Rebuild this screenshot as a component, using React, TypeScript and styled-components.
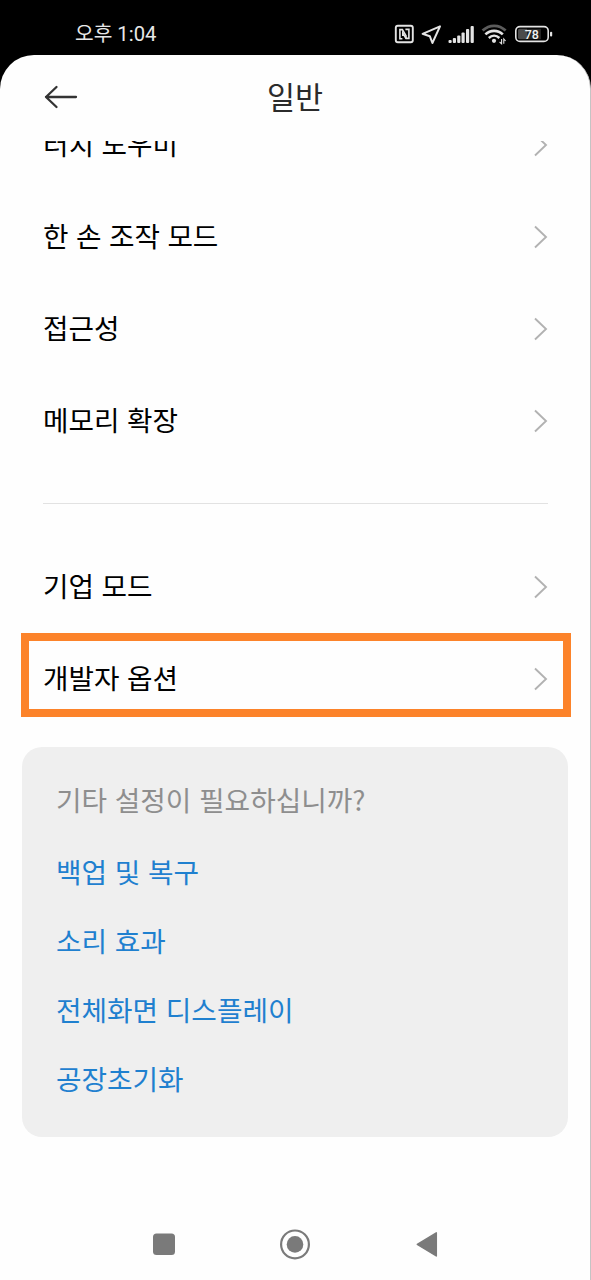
import React from "react";
import styled, { createGlobalStyle } from "styled-components";

const GlobalStyle = createGlobalStyle`
  * { box-sizing: border-box; }
  body { margin: 0; background: #000; }
`;

const Phone = styled.div`
  width: 591px;
  height: 1280px;
  display: flex;
  flex-direction: column;
  overflow: hidden;
  background: #000;
  font-family: "Noto Sans CJK KR", "Noto Sans", sans-serif;
  color: #000;
`;

const StatusBar = styled.header`
  height: 55px;
  flex: none;
  display: flex;
  align-items: center;
  justify-content: space-between;
  padding: 13px 38px 0 75px;
`;

const Clock = styled.span`
  font-family: Roboto, "Noto Sans CJK KR", sans-serif;
  font-size: 20.3px;
  line-height: 28px;
  color: #e8e8e8;
`;

const StatusIcons = styled.div`
  display: flex;
  align-items: center;
  height: 24px;

  svg { display: block; }
`;

const Screen = styled.main`
  flex: 1;
  min-height: 0;
  display: flex;
  flex-direction: column;
  background: #fefefe;
  border-right: 1px solid #c4c4c4;
  border-radius: 34px 34px 0 0;
`;

const TitleBar = styled.div`
  height: 86px;
  flex: none;
  display: grid;
  grid-template-columns: 80px 1fr 80px;
  align-items: center;
`;

const BackButton = styled.button`
  border: 0;
  padding: 0 0 2px 44px;
  background: none;
  display: flex;
`;

const Title = styled.h1`
  margin: 0;
  padding-bottom: 4px;
  text-align: center;
  font-size: 30.5px;
  font-weight: 400;
  line-height: 44px;
  color: #2b2b2b;
`;

const Content = styled.div`
  flex: 1;
  min-height: 0;
  overflow: hidden;
`;

const List = styled.div<{ $offset?: number }>`
  margin-top: ${({ $offset = 0 }) => $offset}px;
`;

const Row = styled.div`
  height: 92px;
  display: flex;
  align-items: center;
  justify-content: space-between;
  padding: 0 42px 0 43px;
  font-size: 27.7px;
  line-height: 40px;
  word-spacing: 1.3px;
`;

const RowLabel = styled.span`
  padding-bottom: 4px;
`;

const Divider = styled.hr`
  height: 1px;
  border: 0;
  margin: 36px 42px 37px 43px;
  background: #e2e2e2;
`;

const Highlight = styled.div`
  height: 84px;
  margin: 0 19px 0 21px;
  border: 8px solid #fc832a;
  display: flex;

  ${Row} {
    flex: 1;
    height: auto;
    padding: 7px 15px 0 14px;
  }
`;

const Card = styled.section`
  height: 390px;
  margin: 30px 22px 0 22px;
  padding: 18px 34px;
  border-radius: 20px;
  background: #efefef;
  font-size: 27.75px;
  word-spacing: 1.5px;
`;

const CardTitle = styled.p`
  margin: 0 0 3px;
  line-height: 69px;
  color: #8e8e8e;
`;

const CardLink = styled.a`
  display: block;
  line-height: 69px;
  color: #1f80cf;
`;

const NavBar = styled.nav`
  height: 72px;
  flex: none;
  display: flex;
  justify-content: space-between;
  align-items: center;
  padding: 0 152px 0 152px;
`;

const Chevron = () => (
  <svg width="14" height="24" viewBox="0 0 14 24" fill="none" stroke="#b2b2b2" strokeWidth="1.9">
    <path d="M1 1.5 L12 12 L1 22.5" />
  </svg>
);

const SettingRow = ({ label }: { label: string }) => (
  <Row>
    <RowLabel>{label}</RowLabel>
    <Chevron />
  </Row>
);

const signalBars = [
  [0.5, 3], [4.8, 5], [9.2, 7.5], [13.5, 10.5], [18, 14], [22.6, 17],
];

const StatusGlyphs = () => (
  <svg width="159" height="24" viewBox="394 22 159 24" fill="none" stroke="#e4e4e4">
    <rect x="395.8" y="25.8" width="17" height="16.4" rx="2" strokeWidth="1.9" />
    <path d="M402.4 38.8H399.9V29.6H402.4L406 35.6V38.4" strokeWidth="1.6" />
    <path d="M405.4 29.4H408.9V38.4H406L402.8 33V36" strokeWidth="1.6" />
    <path d="M440 26.3L422.6 33.8L429.8 36.2L432.4 43Z" strokeWidth="2" strokeLinejoin="round" />
    {signalBars.map(([x, h]) => (
      <rect key={x} x={448 + x} y={43 - h} width="3.2" height={h} rx="1" fill="#e4e4e4" stroke="none" />
    ))}
    <path d="M482.6 30.6C489.4 24.2 499 24.2 505.6 30.6" stroke="#5c5c5c" strokeWidth="2.8" />
    <path d="M485.4 34.4C490.4 29.6 497.8 29.6 502.8 34.4" strokeWidth="2.7" />
    <path d="M488.8 38C492 35 496.2 35 499.4 38" strokeWidth="2.5" />
    <circle cx="494" cy="40.8" r="2.1" fill="#e4e4e4" stroke="none" />
    <path d="M501.6 39V43.8L499.6 42M503.8 43.8V39L505.6 41" strokeWidth="1.1" />
    <rect x="515.8" y="26.6" width="32.4" height="14.8" rx="4.2" strokeWidth="1.6" />
    <path d="M519.6 28.8H527V39.2H519.6Q518 39.2 518 37.6V30.4Q518 28.8 519.6 28.8Z" fill="#4b4b4b" stroke="none" />
    <path d="M527 28.8H541V39.2H527Z" fill="#242424" stroke="none" />
    <rect x="550" y="31.8" width="2.2" height="4.8" rx="1" fill="#e4e4e4" stroke="none" />
    <text x="531.8" y="38.6" textAnchor="middle" fontFamily="Roboto, sans-serif" fontWeight="500" fontSize="12.5" fill="#f2f2f2" stroke="none">78</text>
  </svg>
);

export default function App() {
  return (
    <Phone>
      <GlobalStyle />
      <StatusBar>
        <Clock>오후 1:04</Clock>
        <StatusIcons>
          <StatusGlyphs />
        </StatusIcons>
      </StatusBar>
      <Screen>
        <TitleBar>
          <BackButton aria-label="뒤로">
            <svg width="34" height="24" viewBox="0 0 34 24" fill="none" stroke="#333" strokeWidth="2.3" strokeLinecap="round" strokeLinejoin="round">
              <path d="M12.5 2L2 12L12.5 22M2 12H32" />
            </svg>
          </BackButton>
          <Title>일반</Title>
        </TitleBar>
        <Content>
          <List $offset={-42}>
            <SettingRow label="터치 도우미" />
            <SettingRow label="한 손 조작 모드" />
            <SettingRow label="접근성" />
            <SettingRow label="메모리 확장" />
          </List>
          <Divider />
          <List>
            <SettingRow label="기업 모드" />
            <Highlight>
              <SettingRow label="개발자 옵션" />
            </Highlight>
          </List>
          <Card>
            <CardTitle>기타 설정이 필요하십니까?</CardTitle>
            <CardLink>백업 및 복구</CardLink>
            <CardLink>소리 효과</CardLink>
            <CardLink>전체화면 디스플레이</CardLink>
            <CardLink>공장초기화</CardLink>
          </Card>
        </Content>
        <NavBar>
          <svg width="24" height="24" viewBox="0 0 24 24" fill="#7a7a7a">
            <rect x="1" y="1.4" width="22" height="21.5" rx="3.5" />
          </svg>
          <svg width="32" height="32" viewBox="0 0 32 32" fill="none" stroke="#7a7a7a" strokeWidth="2.2">
            <circle cx="16" cy="16.4" r="13.9" />
            <circle cx="16" cy="16.4" r="8.3" fill="#7a7a7a" stroke="none" />
          </svg>
          <svg width="24" height="28" viewBox="0 0 24 28" fill="#7a7a7a" stroke="#7a7a7a" strokeWidth="1.5" strokeLinejoin="round">
            <path d="M22.3 2.9V25.9L3.3 14.4Z" />
          </svg>
        </NavBar>
      </Screen>
    </Phone>
  );
}
